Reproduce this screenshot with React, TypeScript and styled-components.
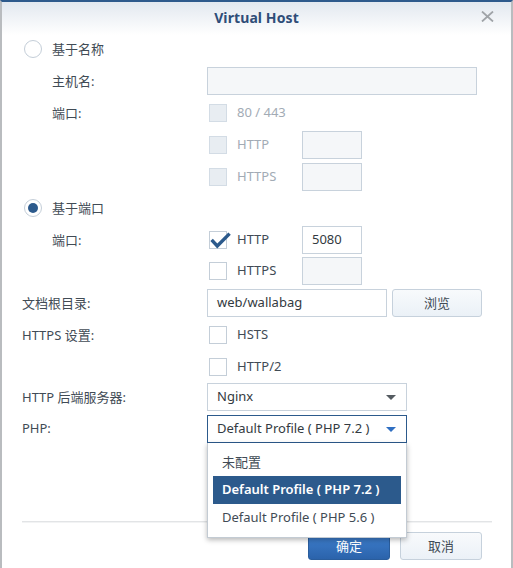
import React from 'react';
import styled, { createGlobalStyle } from 'styled-components';

const GlobalStyle = createGlobalStyle`
  html, body {
    margin: 0;
    padding: 0;
    background: #ffffff;
  }
  body {
    font-family: "Noto Sans", "Noto Sans CJK SC", sans-serif;
    font-size: 13px;
    color: #414b55;
  }
  * {
    box-sizing: border-box;
  }
`;

export default function App() {
  return (
    <>
      <GlobalStyle />
      <Window>
        <Header>
          <Title>Virtual Host</Title>
          <CloseButton aria-label="close">
            <svg width="13" height="11" viewBox="0 0 13 11">
              <path d="M1 0.5 L12 10.5 M12 0.5 L1 10.5" stroke="#a0a4a8" strokeWidth="1.8" />
            </svg>
          </CloseButton>
        </Header>

        <Form>
          <Row $mt={0}>
            <RadioOption>
              <Radio $checked={false} />
              <span>基于名称</span>
            </RadioOption>
          </Row>
          <Row $mt={4}>
            <Label $indent>主机名:</Label>
            <Controls>
              <TextInput $width={270} $disabled />
            </Controls>
          </Row>
          <Row $mt={4}>
            <Label $indent>端口:</Label>
            <Controls>
              <CheckOption $disabled>
                <CheckBox $disabled />
                <span>80 / 443</span>
              </CheckOption>
            </Controls>
          </Row>
          <Row $mt={4}>
            <Label />
            <Controls>
              <CheckOption $disabled>
                <CheckBox $disabled />
                <span>HTTP</span>
              </CheckOption>
              <TextInput $width={60} $disabled />
            </Controls>
          </Row>
          <Row $mt={4}>
            <Label />
            <Controls>
              <CheckOption $disabled>
                <CheckBox $disabled />
                <span>HTTPS</span>
              </CheckOption>
              <TextInput $width={60} $disabled />
            </Controls>
          </Row>

          <Row $mt={3}>
            <RadioOption>
              <Radio $checked />
              <span>基于端口</span>
            </RadioOption>
          </Row>
          <Row $mt={4}>
            <Label $indent>端口:</Label>
            <Controls>
              <CheckOption>
                <CheckBox>
                  <CheckMark width="24" height="20" viewBox="0 0 24 20">
                    <path
                      d="M2.6 8.8 L8.3 15 L20.6 2.6"
                      fill="none"
                      stroke="#2c5a8c"
                      strokeWidth="3.4"
                      strokeLinejoin="miter"
                    />
                  </CheckMark>
                </CheckBox>
                <span>HTTP</span>
              </CheckOption>
              <TextInput $width={60}>5080</TextInput>
            </Controls>
          </Row>
          <Row $mt={3}>
            <Label />
            <Controls>
              <CheckOption>
                <CheckBox />
                <span>HTTPS</span>
              </CheckOption>
              <TextInput $width={60} $disabled />
            </Controls>
          </Row>

          <Row $mt={4}>
            <Label>文档根目录:</Label>
            <Controls $gap={5}>
              <TextInput $width={180}>web/wallabag</TextInput>
              <Button $width={90}>浏览</Button>
            </Controls>
          </Row>
          <Row $mt={4}>
            <Label>HTTPS 设置:</Label>
            <Controls>
              <CheckOption>
                <CheckBox />
                <span>HSTS</span>
              </CheckOption>
            </Controls>
          </Row>
          <Row $mt={4}>
            <Label />
            <Controls>
              <CheckOption>
                <CheckBox />
                <span>HTTP/2</span>
              </CheckOption>
            </Controls>
          </Row>
          <Row $mt={2}>
            <Label>HTTP 后端服务器:</Label>
            <Controls>
              <Select>
                <span>Nginx</span>
                <Caret $color="#555b61" />
              </Select>
            </Controls>
          </Row>
          <Row $mt={4}>
            <Label>PHP:</Label>
            <Controls>
              <SelectWrap>
                <Select $focused>
                  <span>Default Profile ( PHP 7.2 )</span>
                  <Caret $color="#2f6fc2" />
                </Select>
                <Menu>
                  <MenuItem>未配置</MenuItem>
                  <MenuItem $active>Default Profile ( PHP 7.2 )</MenuItem>
                  <MenuItem>Default Profile ( PHP 5.6 )</MenuItem>
                </Menu>
              </SelectWrap>
            </Controls>
          </Row>
        </Form>

        <Footer>
          <Separator />
          <ButtonBar>
            <Button $width={82} $primary>确定</Button>
            <Button $width={82}>取消</Button>
          </ButtonBar>
        </Footer>
      </Window>
    </>
  );
}

const Window = styled.div`
  width: 513px;
  height: 568px;
  display: flex;
  flex-direction: column;
  border-top: 2px solid #2e5a8c;
  border-left: 2px solid #b9bcbf;
  border-right: 2px solid #b9bcbf;
  background: #ffffff;
  overflow: hidden;
`;

const Header = styled.div`
  position: relative;
  height: 33px;
  display: flex;
  align-items: center;
  justify-content: center;
  padding-bottom: 3px;
  background: linear-gradient(to bottom, #e2e8ef 0%, #ffffff 100%);
`;

const Title = styled.div`
  font-size: 14px;
  font-weight: 700;
  color: #2f4d78;
  letter-spacing: 0.1px;
`;

const CloseButton = styled.div`
  position: absolute;
  right: 17px;
  top: 9px;
  width: 13px;
  height: 11px;
  display: flex;
`;

const Form = styled.div`
  display: flex;
  flex-direction: column;
  padding: 0 20px;
`;

const Row = styled.div<{ $mt: number }>`
  display: grid;
  grid-template-columns: 185px 1fr;
  align-items: center;
  height: 28px;
  margin-top: ${({ $mt }) => $mt}px;
`;

const Label = styled.div<{ $indent?: boolean }>`
  padding-left: ${({ $indent }) => ($indent ? '30px' : '0')};
  padding-bottom: 2px;
  color: #414b55;
  white-space: nowrap;
`;

const Controls = styled.div<{ $gap?: number }>`
  display: flex;
  align-items: center;
  gap: ${({ $gap }) => $gap ?? 0}px;
  height: 28px;
`;

const RadioOption = styled.div`
  grid-column: 1 / -1;
  display: flex;
  align-items: center;
  gap: 10px;
  padding-left: 2px;
  color: #414b55;

  span:last-child {
    padding-bottom: 2px;
  }
`;

const Radio = styled.span<{ $checked: boolean }>`
  position: relative;
  width: 18px;
  height: 18px;
  border-radius: 50%;
  border: 1px solid #c4ced8;
  background: #ffffff;

  &::after {
    content: '';
    display: ${({ $checked }) => ($checked ? 'block' : 'none')};
    position: absolute;
    left: 3px;
    top: 3px;
    width: 10px;
    height: 10px;
    border-radius: 50%;
    background: #2c5a8c;
  }
`;

const CheckOption = styled.div<{ $disabled?: boolean }>`
  display: flex;
  align-items: center;
  gap: 10px;
  width: 95px;
  padding-left: 2px;
  color: ${({ $disabled }) => ($disabled ? '#a2abb5' : '#414b55')};

  span:last-child {
    padding-bottom: 2px;
  }
`;

const CheckBox = styled.span<{ $disabled?: boolean }>`
  position: relative;
  flex: none;
  width: 18px;
  height: 18px;
  border: 1px solid ${({ $disabled }) => ($disabled ? '#d3dce5' : '#c4ced8')};
  background: ${({ $disabled }) => ($disabled ? '#e8edf2' : '#ffffff')};
`;

const CheckMark = styled.svg`
  position: absolute;
  left: -1px;
  top: -1px;
  overflow: visible;
`;

const TextInput = styled.div<{ $width: number; $disabled?: boolean }>`
  width: ${({ $width }) => $width}px;
  height: 28px;
  display: flex;
  align-items: center;
  padding: 0 0 2px 9px;
  border: 1px solid #c8d2dc;
  background: ${({ $disabled }) => ($disabled ? '#f5f7f9' : '#ffffff')};
  color: #333a41;
`;

const Button = styled.div<{ $width: number; $primary?: boolean }>`
  width: ${({ $width }) => $width}px;
  height: 28px;
  display: flex;
  align-items: center;
  justify-content: center;
  padding-bottom: 2px;
  border-radius: 3px;
  border: 1px solid ${({ $primary }) => ($primary ? '#2a5d9c' : '#c6d1dc')};
  background: ${({ $primary }) =>
    $primary
      ? 'linear-gradient(to bottom, #3f80cf 0%, #2b63ab 100%)'
      : 'linear-gradient(to bottom, #f8fafc 0%, #ebf1f7 100%)'};
  color: ${({ $primary }) => ($primary ? '#ffffff' : '#414b55')};
`;

const SelectWrap = styled.div`
  position: relative;
`;

const Select = styled.div<{ $focused?: boolean }>`
  width: 200px;
  height: 28px;
  display: flex;
  align-items: center;
  justify-content: space-between;
  padding: 0 10px 0 9px;
  border: 1px solid ${({ $focused }) => ($focused ? '#2c5a8c' : '#c8d2dc')};
  background: #ffffff;
  color: #333a41;

  span:first-child {
    padding-bottom: 2px;
  }
`;

const Caret = styled.span<{ $color: string }>`
  width: 0;
  height: 0;
  border-left: 5px solid transparent;
  border-right: 5px solid transparent;
  border-top: 5px solid ${({ $color }) => $color};
`;

const Menu = styled.div`
  position: absolute;
  left: 0;
  top: 28px;
  width: 200px;
  padding: 5px 5px 5px;
  border: 1px solid #c3cbd3;
  border-top: none;
  background: #ffffff;
  box-shadow: 0 2px 5px rgba(0, 0, 0, 0.28);
  z-index: 2;
`;

const MenuItem = styled.div<{ $active?: boolean }>`
  height: 28px;
  display: flex;
  align-items: center;
  padding: 0 0 2px 9px;
  background: ${({ $active }) => ($active ? '#2c5a8c' : 'transparent')};
  color: ${({ $active }) => ($active ? '#ffffff' : '#414b55')};
  font-weight: ${({ $active }) => ($active ? 600 : 400)};
`;

const Footer = styled.div`
  margin-top: auto;
  display: flex;
  flex-direction: column;
`;

const Separator = styled.div`
  margin: 0 19px 0 20px;
  height: 2px;
  border-top: 1px solid #e2e4e6;
  border-bottom: 1px solid #f2f3f4;
`;

const ButtonBar = styled.div`
  display: flex;
  justify-content: flex-end;
  gap: 10px;
  padding: 9px 29px 8px 0;
`;
